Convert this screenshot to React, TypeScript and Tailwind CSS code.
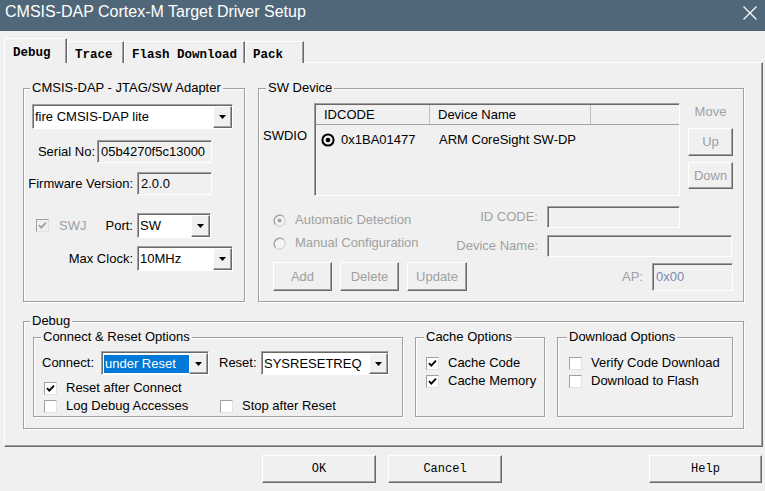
import type { ReactNode } from "react";

const sunken =
  "border border-t-[#a0a0a0] border-l-[#a0a0a0] border-b-white border-r-white shadow-[inset_1px_1px_0_#696969]";
const raised =
  "border border-t-white border-l-white border-b-[#696969] border-r-[#696969] shadow-[inset_-1px_-1px_0_#a0a0a0]";
const group = "border border-[#a0a0a0] shadow-[1px_1px_0_#fff,inset_1px_1px_0_#fff]";

function Legend({ children, className }: { children: ReactNode; className: string }) {
  return <legend className={`px-[2px] leading-[16px] bg-[#f0f0f0] ${className}`}>{children}</legend>;
}

function Arrow() {
  return (
    <svg width="7" height="4" viewBox="0 0 7 4">
      <polygon points="0,0 7,0 3.5,4" fill="#000" />
    </svg>
  );
}

function Combo({ className, text, selected = false }: { className: string; text: string; selected?: boolean }) {
  return (
    <div className={`flex bg-white ${sunken} ${className}`}>
      <div className="flex-1 flex items-center pl-[2px] pt-[1px] overflow-hidden whitespace-nowrap">
        {selected ? (
          <span className="flex-1 h-[18px] flex items-center pl-[1px] bg-[#0078d7] text-white">{text}</span>
        ) : (
          text
        )}
      </div>
      <div className={`w-[19px] mt-[1px] flex items-center justify-center bg-[#f0f0f0] ${raised}`}>
        <Arrow />
      </div>
    </div>
  );
}

function Check({ on = false, disabled = false }: { on?: boolean; disabled?: boolean }) {
  return (
    <div
      className={`w-[13px] h-[13px] shrink-0 flex items-center justify-center border border-t-[#a0a0a0] border-l-[#a0a0a0] border-b-[#e3e3e3] border-r-[#e3e3e3] ${
        disabled ? "bg-[#f0f0f0]" : "bg-white"
      }`}
    >
      {on && (
        <svg width="9" height="9" viewBox="0 0 9 9">
          <path d="M1 4.2 L3.3 6.6 L8 1.6" fill="none" stroke={disabled ? "#a0a0a0" : "#000"} strokeWidth="1.8" />
        </svg>
      )}
    </div>
  );
}

function Radio({ on = false }: { on?: boolean }) {
  return (
    <svg width="13" height="13" viewBox="0 0 13 13" className="shrink-0">
      <circle cx="6.5" cy="6.5" r="5.7" fill="#f4f4f4" stroke="#c8c8c8" strokeWidth="1" />
      <path d="M2.5 10.5 A5.7 5.7 0 0 1 10.5 2.5" fill="none" stroke="#a0a0a0" strokeWidth="1.3" />
      {on && <circle cx="6.5" cy="6.5" r="2" fill="#a0a0a0" />}
    </svg>
  );
}

function Button({ className, children, disabled = false }: { className: string; children: ReactNode; disabled?: boolean }) {
  return (
    <div
      className={`flex items-center justify-center bg-[#f0f0f0] ${raised} ${disabled ? "text-[#a0a0a0]" : ""} ${className}`}
    >
      {children}
    </div>
  );
}

function Edit({ className, text, textClass = "" }: { className: string; text?: string; textClass?: string }) {
  return (
    <div className={`flex items-center pl-[3px] bg-[#f0f0f0] ${sunken} ${className} ${textClass}`}>{text}</div>
  );
}

function CheckRow({ on, label, className }: { on?: boolean; label: string; className: string }) {
  return (
    <div className={`h-[18px] flex items-center ${className}`}>
      <Check on={on} />
      <span className="ml-[9px] whitespace-nowrap">{label}</span>
    </div>
  );
}

function Tab({ label, active = false, className }: { label: string; active?: boolean; className: string }) {
  return (
    <div
      className={`relative bg-[#f0f0f0] border-t border-l border-t-white border-l-white border-r border-r-[#696969] shadow-[inset_-1px_0_0_#a0a0a0] font-['Liberation_Mono',monospace] font-bold text-[12.5px] leading-[14px] whitespace-nowrap ${
        active ? "z-10 h-[25px] pt-[7px] pl-[8px]" : "h-[22px] pt-[6px] pl-[7px]"
      } ${className}`}
    >
      {label}
    </div>
  );
}

export default function App() {
  return (
    <div className="w-[765px] h-[491px] overflow-hidden flex flex-col bg-[#f0f0f0] text-black text-[13px] font-['Liberation_Sans',Arial,sans-serif]">
      {/* title bar */}
      <div className="h-[31px] shrink-0 flex items-start justify-between pl-[5px] pr-[8px] bg-[#50677a]">
        <span className="pt-[3px] text-[16px] leading-[18px] text-white">CMSIS-DAP Cortex-M Target Driver Setup</span>
        <svg className="mt-[6px]" width="14" height="14" viewBox="0 0 14 14">
          <path d="M0.5 0.5 L13.5 13.5 M13.5 0.5 L0.5 13.5" stroke="#fff" strokeWidth="1.2" />
        </svg>
      </div>

      {/* tabs */}
      <div className="h-[32px] shrink-0 flex items-end pl-[4px]">
        <Tab label="Debug" active className="w-[63px]" />
        <Tab label="Trace" className="w-[57px]" />
        <Tab label="Flash Download" className="w-[121px]" />
        <Tab label="Pack" className="w-[59px]" />
      </div>

      {/* tab page */}
      <div
        className={`-mt-[1px] ml-[4px] w-[759px] h-[385px] shrink-0 flex flex-col pt-[17px] pl-[18px] border border-t-white border-l-white border-r-[#696969] border-b-[#696969] shadow-[inset_-1px_-1px_0_#a0a0a0]`}
      >
        <div className="flex gap-[13px]">
          {/* adapter */}
          <fieldset className={`w-[222px] h-[222px] ${group}`}>
            <Legend className="ml-[6px]">CMSIS-DAP - JTAG/SW Adapter</Legend>
            <Combo className="ml-[8px] mt-[8px] w-[201px] h-[25px]" text="fire CMSIS-DAP lite" />
            <div className="mt-[11px] flex items-center">
              <span className="w-[73px] pr-[2px] text-right">Serial No:</span>
              <Edit className="w-[115px] h-[23px]" text="05b4270f5c13000" />
            </div>
            <div className="mt-[9px] flex items-center">
              <span className="w-[113px] pr-[4px] text-right whitespace-nowrap">Firmware Version:</span>
              <Edit className="w-[75px] h-[23px]" text="2.0.0" />
            </div>
            <div className="mt-[18px] flex items-center">
              <div className="w-[113px] flex items-center">
                <div className="ml-[12px]">
                  <Check on disabled />
                </div>
                <span className="ml-[10px] text-[#a0a0a0]">SWJ</span>
                <span className="ml-auto pr-[4px]">Port:</span>
              </div>
              <Combo className="w-[74px] h-[25px]" text="SW" />
            </div>
            <div className="mt-[8px] flex items-center">
              <span className="w-[113px] pr-[4px] text-right">Max Clock:</span>
              <Combo className="w-[96px] h-[25px]" text="10MHz" />
            </div>
          </fieldset>

          {/* sw device */}
          <fieldset className={`w-[486px] h-[222px] ${group}`}>
            <Legend className="ml-[7px]">SW Device</Legend>
            <div className="mt-[7px] flex">
              <div className="w-[55px] pl-[4px] pt-[25px] leading-[16px]">SWDIO</div>
              <div
                className={`w-[366px] h-[93px] border border-t-[#a0a0a0] border-l-[#a0a0a0] border-b-white border-r-white shadow-[inset_1px_1px_0_#696969] pl-[1px] pt-[1px]`}
              >
                <div className="h-[20px] flex border-b border-[#a0a0a0]">
                  <div className="w-[114px] pl-[8px] flex items-center border-r border-[#c0c0c0]">IDCODE</div>
                  <div className="w-[161px] pl-[8px] flex items-center border-r border-[#c0c0c0]">Device Name</div>
                </div>
                <div className="mt-[6px] h-[18px] flex items-center">
                  <div className="w-[114px] flex items-center pl-[5px]">
                    <svg width="14" height="14" viewBox="0 0 14 14">
                      <circle cx="7" cy="7" r="5.6" fill="none" stroke="#000" strokeWidth="2" />
                      <circle cx="7" cy="7" r="2.3" fill="#000" />
                    </svg>
                    <span className="ml-[6px]">0x1BA01477</span>
                  </div>
                  <span className="pl-[9px]">ARM CoreSight SW-DP</span>
                </div>
              </div>
              <div className="ml-[8px] w-[45px] flex flex-col">
                <div className="mt-[1px] leading-[16px] text-center text-[#a0a0a0]">Move</div>
                <Button className="mt-[8px] h-[28px]" disabled>
                  Up
                </Button>
                <Button className="mt-[6px] h-[27px]" disabled>
                  Down
                </Button>
              </div>
            </div>

            <div className="mt-[10px] flex text-[#a0a0a0]">
              <div className="w-[190px] pl-[14px] pt-[6px] flex flex-col gap-[7px]">
                <div className="h-[16px] flex items-center gap-[9px] whitespace-nowrap">
                  <Radio on />
                  Automatic Detection
                </div>
                <div className="h-[16px] flex items-center gap-[9px] whitespace-nowrap">
                  <Radio />
                  Manual Configuration
                </div>
              </div>
              <div className="flex flex-col gap-[7px]">
                <div className="flex items-center">
                  <span className="w-[89px] text-right">ID CODE:</span>
                  <Edit className="ml-[9px] w-[133px] h-[22px]" />
                </div>
                <div className="flex items-center">
                  <span className="w-[89px] text-right whitespace-nowrap">Device Name:</span>
                  <Edit className="ml-[9px] w-[185px] h-[22px]" />
                </div>
              </div>
            </div>

            <div className="mt-[5px] flex items-center pr-[10px]">
              <Button className="ml-[14px] w-[59px] h-[29px]" disabled>
                Add
              </Button>
              <Button className="ml-[8px] w-[59px] h-[29px]" disabled>
                Delete
              </Button>
              <Button className="ml-[8px] w-[60px] h-[29px]" disabled>
                Update
              </Button>
              <span className="ml-auto text-[#a0a0a0]">AP:</span>
              <Edit className="ml-[9px] w-[81px] h-[28px]" text="0x00" textClass="text-[#7b8db3]" />
            </div>
          </fieldset>
        </div>

        {/* debug */}
        <fieldset className={`mt-[11px] w-[721px] h-[116px] ${group}`}>
          <Legend className="ml-[6px]">Debug</Legend>
          <div className="flex gap-[12px] pl-[9px]">
            <fieldset className={`w-[370px] h-[88px] ${group}`}>
              <Legend className="ml-[7px]">Connect &amp; Reset Options</Legend>
              <div className="mt-[6px] flex items-center">
                <span className="ml-[8px] w-[59px]">Connect:</span>
                <Combo className="w-[108px] h-[24px]" text="under Reset" selected />
                <span className="ml-[10px] w-[42px]">Reset:</span>
                <Combo className="w-[128px] h-[24px]" text="SYSRESETREQ" />
              </div>
              <CheckRow on label="Reset after Connect" className="mt-[4px] pl-[10px]" />
              <div className="flex">
                <CheckRow label="Log Debug Accesses" className="pl-[10px] w-[186px]" />
                <CheckRow label="Stop after Reset" className="" />
              </div>
            </fieldset>

            <fieldset className={`w-[130px] h-[88px] ${group}`}>
              <Legend className="ml-[8px]">Cache Options</Legend>
              <CheckRow on label="Cache Code" className="mt-[9px] pl-[10px]" />
              <CheckRow on label="Cache Memory" className="pl-[10px]" />
            </fieldset>

            <fieldset className={`w-[176px] h-[88px] ${group}`}>
              <Legend className="ml-[9px]">Download Options</Legend>
              <CheckRow label="Verify Code Download" className="mt-[9px] pl-[11px]" />
              <CheckRow label="Download to Flash" className="pl-[11px]" />
            </fieldset>
          </div>
        </fieldset>
      </div>

      {/* dialog buttons */}
      <div className="mt-[8px] flex font-['Liberation_Mono',monospace] text-[12px]">
        <Button className="ml-[262px] w-[114px] h-[28px]">OK</Button>
        <Button className="ml-[12px] w-[114px] h-[28px]">Cancel</Button>
        <Button className="ml-auto mr-[3px] w-[113px] h-[28px]">Help</Button>
      </div>
    </div>
  );
}
